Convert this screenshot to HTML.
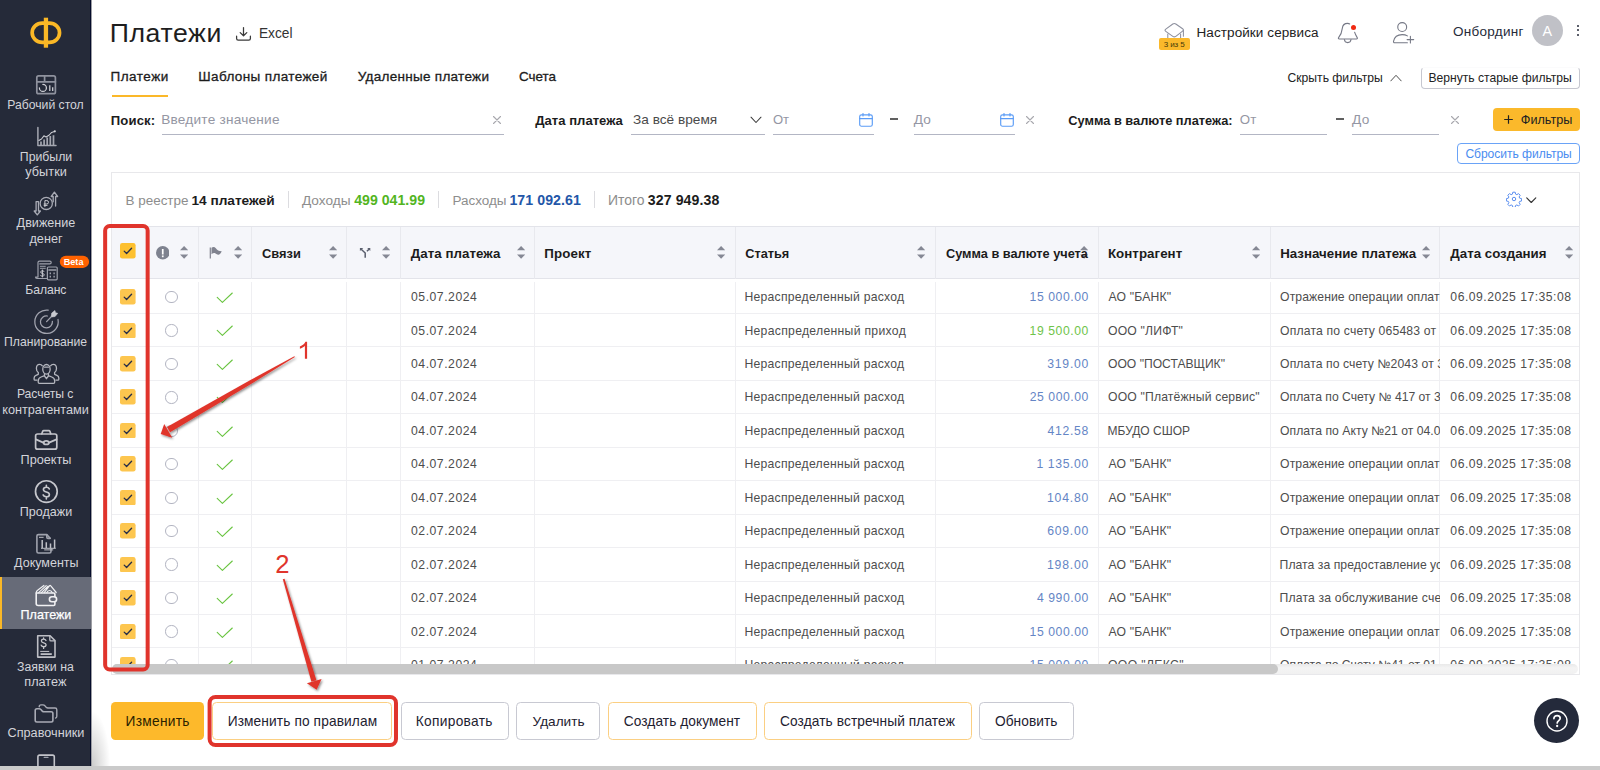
<!DOCTYPE html>
<html lang="ru"><head><meta charset="utf-8"><title>Платежи</title>
<style>
*{box-sizing:border-box;margin:0;padding:0}
html,body{width:1600px;height:770px;overflow:hidden;background:#fff}
body{font-family:"Liberation Sans",sans-serif;color:#1c1c1c;position:relative;font-size:13px}
.abs{position:absolute;white-space:nowrap;line-height:1}
/* sidebar */
#sb{position:absolute;left:0;top:0;width:91px;height:766px;background:#252a39;overflow:hidden}
#botbar{position:absolute;left:0;top:766.200px;width:1600px;height:3.800px;background:#cacaca}
#sbshadow{position:absolute;left:92px;top:712px;width:18px;height:54px;background:radial-gradient(ellipse at 0% 100%,rgba(0,0,0,.20),rgba(0,0,0,0) 72%)}
/* top */
/* table */
#tbl{position:absolute;left:111px;top:172px;width:1469px;height:503px;border:1px solid #e8e8eb;overflow:hidden}
#tin{position:absolute;left:-112px;top:-173px;width:1600px;height:770px}

</style></head>
<body>
<div id="sb"></div><div class="abs" style="left:90px;top:0;width:1px;height:766px;background:#050c2a"></div><div class="abs" style="left:91px;top:0;width:1px;height:766px;background:#9c9da3"></div>
<div class="abs" style="left:0;top:577.3px;width:91px;height:51.500px;background:#676b78;border-left:2.500px solid #fbb826"></div>
<svg class="abs" style="left:0;top:0;width:91px;height:770px" viewBox="0 0 91 770" fill="none" stroke="#b9bbc3" stroke-width="1.500" stroke-linecap="round" stroke-linejoin="round">
<rect x="32.150" y="23.150" width="27.400" height="19.200" rx="10.200" ry="9.600" stroke="#fbb826" stroke-width="3.700"/><path d="M45.950 17.700V47.700" stroke="#fbb826" stroke-width="4.300" stroke-linecap="butt"/>
<g stroke="#8f929e" stroke-width="1.700"><rect x="36.800" y="75.900" width="18.600" height="17.800" rx="1.800"/><path d="M36.800 81.800h18.600M44.600 76v5.800"/></g><path d="M42.900 84.400A3.500 3.500 0 1 1 39.400 87.900" stroke="#cfd0d6" stroke-width="1.250"/><path d="M49.800 85.200v5.800M52.700 87.300v3.700" stroke="#cfd0d6" stroke-width="1.250" stroke-linecap="butt"/>
<g stroke="#a4a6b0"><path d="M37.900 127.600V145.400H56" stroke-width="1.500"/><path d="M41 145v-3.600M44.100 145v-5.500M47.200 145v-7.400M50.300 145v-9M53.500 145v-9.800" stroke-width="1.700" stroke-linecap="butt"/></g><path d="M38.900 140.400l2.600-1.400 2.400-3.200 2.200 1.200 3.200-2 2.300-2.600 2.800-1" stroke="#c9cad0" stroke-width="1.100"/><circle cx="54.800" cy="131.300" r="1.100" fill="#d6d7dc" stroke="none"/>
<g stroke="#a9abb5" stroke-width="1.300"><circle cx="46.250" cy="203.400" r="6.100"/><path d="M36.100 201.600h2.400v9.400h1.900l-3.100 3.900-3.100-3.900h1.900z"/><path d="M55.600 206v-9.500h2l-3.200-4.400-3.200 4.400h2v5.300"/></g><path d="M44.900 206.700v-6.100h1.900a1.700 1.700 0 0 1 0 3.400h-2.700M44.100 205.400h3" stroke="#c9cad0" stroke-width="1"/>
<g stroke="#9da0ab" stroke-width="1.200"><path d="M38 262.600c0-.9.600-1.500 1.500-1.500h10.300c.8 0 1.400.6 1.400 1.400 0 .8-.6 1.400-1.400 1.400h-10M38 262.600v14.500M46.800 278.500h-9.800c-.9 0-1.500-.600-1.500-1.400h2.500"/><rect x="47.400" y="267" width="9.800" height="12.800" rx="1"/><path d="M48.900 270h6.800" stroke-width="1.600"/><path d="M49.600 273.400h1.400M53.400 273.400h1.400M49.600 276.600h1.400M53.400 276.600h1.400" stroke-width="1.800" stroke-linecap="butt"/><path d="M40.300 266.300h5M40.300 268.300h5" stroke-width="1"/></g><path d="M44.100 271.600c-.4-.6-1-.8-1.700-.8-1 0-1.700.5-1.700 1.300 0 1.900 3.500.8 3.500 2.700 0 .8-.7 1.400-1.800 1.400-.8 0-1.500-.3-1.900-.9M42.400 270v7" stroke="#c9cad0" stroke-width="1"/>
<rect x="59.800" y="255.700" width="29.300" height="12.200" rx="6.100" fill="#ff6200" stroke="none"/>
<g stroke="#a2a4af" stroke-width="1.250"><path d="M48.200 310.200a11.700 11.700 0 1 0 9.800 9.300"/><path d="M47.400 316a6 6 0 1 0 5 5.300"/><path d="M46.600 321.600l6.300-6.600"/></g><path d="M51.300 316.100l.4-3 3.200-2.600.6 2.200 2.200.6-2.600 3.200-3 .4z" fill="#c9cad0" stroke="#c9cad0" stroke-width=".6"/>
<g stroke="#b4b6be" stroke-width="1.300"><ellipse cx="46.450" cy="369.300" rx="3.700" ry="4.800"/><path d="M44.600 367.200h3.800"/><path d="M44.500 373.600v2.100l-3.400 1.300c-1.800.7-2.900 2-2.900 3.900v1.200c0 .7.500 1.200 1.200 1.200h14.100c.7 0 1.200-.5 1.200-1.200v-1.200c0-1.900-1.100-3.200-2.900-3.900l-3.400-1.300v-2.100M44.500 376l1.950 2.700 1.950-2.700"/><path d="M42.300 365.800c-.6-1-1.500-1.500-2.600-1.500-2 0-3.300 1.700-3.300 4.100 0 1.800.8 3.300 1.900 4.200v1.700l-2.300 1c-1.200.5-1.900 1.500-1.900 2.800v1.100c0 .6.400.9.900.9h2"/><path d="M50.600 365.800c.6-1 1.500-1.500 2.600-1.500 2 0 3.300 1.700 3.300 4.100 0 1.800-.8 3.300-1.900 4.200v1.700l2.300 1c1.200.5 1.900 1.500 1.900 2.800v1.100c0 .6-.4.900-.9.900h-2"/></g>
<g stroke="#c3c4ca" stroke-width="1.700"><rect x="35.600" y="434" width="21.200" height="15.200" rx="2"/><path d="M41.800 433.800l.9-2.400c.2-.5.600-.8 1.100-.8h5c.5 0 .9.300 1.100.8l.9 2.400"/><path d="M35.900 439.400l8 3.500M56.500 439.400l-8 3.500"/><ellipse cx="46.250" cy="442.700" rx="2.700" ry="1.750"/></g>
<g stroke="#c6c7cd" stroke-width="1.700"><circle cx="46.350" cy="491.600" r="10.850"/></g><path d="M49.300 488.900c-.5-1.100-1.600-1.700-2.900-1.700-1.800 0-3 .9-3 2.300 0 3.300 6 1.500 6 4.900 0 1.400-1.300 2.400-3.100 2.400-1.500 0-2.700-.7-3.200-1.900M46.350 485.300v1.900M46.350 496.800v2.200" stroke="#c6c7cd" stroke-width="1.600"/>
<g stroke="#9fa2ad" stroke-width="1.600"><path d="M51 548.800v2.700c0 .9-.6 1.500-1.500 1.500h-11.100c-.9 0-1.500-.600-1.500-1.500v-15.400c0-.9.600-1.500 1.500-1.500h8.400l3.400 3.600"/><path d="M46.800 534.800v2.400c0 .7.500 1.200 1.200 1.200h2"/></g><g stroke="#bfc0c7" stroke-width="1.500" stroke-linecap="butt"><path d="M42.200 540v8M46.300 542.200v5.800M50.500 543.400v4.600M54.600 539.400v8.600"/><path d="M41 548.300h14.800" stroke-width="1"/><path d="M44.200 549.900h9" stroke-width="1"/><path d="M39 537.300h4.600" stroke-width="1"/></g>
<g stroke="#f1f1f3" stroke-width="1.600"><path d="M54.900 596.500v-2.300c0-.7-.5-1.200-1.200-1.200H36.200v10.500c0 1.200.8 2 2 2h15.500c.7 0 1.200-.5 1.200-1.200v-2.300"/><rect x="49.400" y="596.700" width="7.200" height="5" rx="2.500"/><path d="M36.200 593c0-1.400.4-2.200 1.400-2.800l6.300-4.800M38.600 592.600l7.600-7M41.400 592.600l6.600-6.400M44.200 592.600l5.400-6.900c.3-.4.700-.4 1 0l5.600 6.800" stroke-width="1.200"/><path d="M46.800 592.600c.4-1.400 1.400-2.100 2.700-2.100 1.300 0 2.300.7 2.700 2.100" stroke-width="1.200"/></g>
<g stroke="#bdbec5" stroke-width="1.600"><path d="M37.700 635.700h12.400l4.900 4.900v16.500H37.700z"/><path d="M49.800 636v3.700c0 .7.500 1.200 1.200 1.200h3.700" stroke-width="1.300"/></g><path d="M46 640.500c-.4-.9-1.200-1.300-2.300-1.300-1.400 0-2.300.7-2.300 1.800 0 2.500 4.700 1.100 4.700 3.800 0 1.100-1 1.900-2.400 1.900-1.200 0-2.100-.500-2.500-1.500M43.600 637.800v1.400M43.600 646.700v1.700" stroke="#c6c7cd" stroke-width="1.300"/><path d="M40.600 651.400h8.200" stroke="#c6c7cd" stroke-width="1"/><path d="M40.600 654.100h11.200" stroke="#bdbec5" stroke-width="1.800" stroke-linecap="butt"/>
<g stroke="#a9abb5" stroke-width="1.600"><path d="M35.200 710.500c0-1 .7-1.700 1.700-1.700h2.300c.7 0 1.200.2 1.700.7l1.400 1.600c.5.500 1 .7 1.700.7h7.200c1 0 1.700.7 1.700 1.700v6.800c0 1-.7 1.700-1.700 1.700H36.900c-1 0-1.700-.7-1.700-1.700z"/><path d="M39.200 706.800c0-1.200.7-1.900 1.800-1.900h2c.7 0 1.200.2 1.700.7l1.500 1.700c.5.500 1 .7 1.700.7h7.200c1 0 1.700.7 1.700 1.700v6.600c0 .9-.4 1.500-1.200 1.800" stroke-width="1.400"/></g>
<path d="M37.900 766v-9.200c0-1 .7-1.700 1.700-1.700h13c1 0 1.700.7 1.700 1.700v9.200" stroke="#c3c4ca" stroke-width="1.600"/><path d="M44.300 757.400h3.600" stroke="#9da0ab" stroke-width="1.400"/>
</svg>
<span class="abs" style="left:7.32px;top:97.00px;font-size:12.20px;line-height:16px;letter-spacing:-0.008px;color:#d3d4d9;">Рабочий стол</span>
<span class="abs" style="left:19.82px;top:149.00px;font-size:12.28px;line-height:16px;letter-spacing:0.000px;color:#d3d4d9;">Прибыли</span>
<span class="abs" style="left:25.20px;top:164.00px;font-size:12.70px;line-height:16px;letter-spacing:0.078px;color:#d3d4d9;">убытки</span>
<span class="abs" style="left:16.60px;top:215.00px;font-size:12.61px;line-height:16px;letter-spacing:0.000px;color:#d3d4d9;">Движение</span>
<span class="abs" style="left:29.47px;top:231.00px;font-size:12.67px;line-height:16px;letter-spacing:0.000px;color:#d3d4d9;">денег</span>
<span class="abs" style="left:25.22px;top:282.00px;font-size:12.20px;line-height:16px;letter-spacing:-0.048px;color:#d3d4d9;">Баланс</span>
<span class="abs" style="left:4.02px;top:334.00px;font-size:12.20px;line-height:16px;letter-spacing:-0.004px;color:#d3d4d9;">Планирование</span>
<span class="abs" style="left:16.92px;top:386.00px;font-size:12.20px;line-height:16px;letter-spacing:-0.070px;color:#d3d4d9;">Расчеты с</span>
<span class="abs" style="left:2.24px;top:402.00px;font-size:12.69px;line-height:16px;letter-spacing:0.000px;color:#d3d4d9;">контрагентами</span>
<span class="abs" style="left:20.58px;top:452.00px;font-size:12.69px;line-height:16px;letter-spacing:0.000px;color:#d3d4d9;">Проекты</span>
<span class="abs" style="left:19.80px;top:504.00px;font-size:12.56px;line-height:16px;letter-spacing:0.000px;color:#d3d4d9;">Продажи</span>
<span class="abs" style="left:14.10px;top:555.00px;font-size:12.50px;line-height:16px;letter-spacing:0.000px;color:#d3d4d9;">Документы</span>
<span class="abs" style="left:17.03px;top:659.00px;font-size:12.31px;line-height:16px;letter-spacing:0.000px;color:#d3d4d9;">Заявки на</span>
<span class="abs" style="left:24.31px;top:674.00px;font-size:12.68px;line-height:16px;letter-spacing:0.000px;color:#d3d4d9;">платеж</span>
<span class="abs" style="left:7.57px;top:725.00px;font-size:12.68px;line-height:16px;letter-spacing:0.000px;color:#d3d4d9;">Справочники</span>
<span class="abs" style="left:20.60px;top:607.00px;font-size:12.53px;line-height:16px;letter-spacing:0.000px;color:#fff;-webkit-text-stroke:0.25px #fff;">Платежи</span>
<span class="abs" style="left:63.75px;top:256.00px;font-size:9.10px;line-height:12px;letter-spacing:0.000px;color:#fff;font-weight:bold;">Beta</span><div id="sbshadow"></div><div id="botbar"></div>
<span class="abs" id="title" style="left:109.67px;top:16.00px;font-size:26.65px;line-height:34px;letter-spacing:0.600px;color:#1e1e1e;">Платежи</span>
<svg class="abs" style="left:235px;top:25.5px;width:17px;height:16px;fill:none;stroke:#3a3a3a;stroke-width:1.25;stroke-linecap:round;stroke-linejoin:round" viewBox="0 0 17 16"><path d="M8.5 1.5v8.2M5.2 6.6l3.3 3.2 3.3-3.2M1.6 10.2v2.2a1.6 1.6 0 0 0 1.6 1.6h10.6a1.6 1.6 0 0 0 1.6-1.6v-2.2"/></svg>
<span class="abs" style="left:258.90px;top:24.50px;font-size:13.74px;line-height:18px;letter-spacing:0.000px;color:#333;">Excel</span>
<span class="abs" style="left:110.52px;top:68.00px;font-size:13.53px;line-height:17px;letter-spacing:0.500px;color:#1c1c1c;-webkit-text-stroke:0.3px #1c1c1c;">Платежи</span>
<span class="abs" style="left:198.32px;top:68.00px;font-size:13.53px;line-height:17px;letter-spacing:0.364px;color:#1c1c1c;-webkit-text-stroke:0.3px #1c1c1c;">Шаблоны платежей</span>
<span class="abs" style="left:357.79px;top:68.00px;font-size:13.53px;line-height:17px;letter-spacing:0.280px;color:#1c1c1c;-webkit-text-stroke:0.3px #1c1c1c;">Удаленные платежи</span>
<span class="abs" style="left:518.93px;top:68.00px;font-size:13.43px;line-height:17px;letter-spacing:0.000px;color:#1c1c1c;-webkit-text-stroke:0.3px #1c1c1c;">Счета</span>
<div class="abs" style="left:111.5px;top:94.6px;width:56.5px;height:2px;background:#fbb829"></div>
<span class="abs" style="left:110.81px;top:112.00px;font-size:13.12px;line-height:17px;letter-spacing:0.136px;color:#1c1c1c;font-weight:bold;">Поиск:</span>
<span class="abs" style="left:161.21px;top:111.00px;font-size:13.63px;line-height:17px;letter-spacing:0.228px;color:#9496a3;">Введите значение</span>
<div class="abs" style="left:162.3px;top:134px;width:342.1px;height:1px;background:#b3b6c4"></div>
<svg class="abs" style="left:492.8px;top:115.7px;width:8px;height:8px;stroke:#a8a8ae;stroke-width:1.1;fill:none;stroke-linecap:round" viewBox="0 0 8 8"><path d="M0.500 0.500l7 7M7.500 0.500l-7 7"/></svg>
<span class="abs" style="left:535.27px;top:112.00px;font-size:13.09px;line-height:17px;letter-spacing:0.000px;color:#1c1c1c;font-weight:bold;">Дата платежа</span>
<span class="abs" style="left:633.09px;top:111.00px;font-size:13.63px;line-height:17px;letter-spacing:0.008px;color:#4a4a4a;">За всё время</span>
<svg class="abs" style="left:750px;top:116px;width:12px;height:8px;fill:none;stroke:#3c3c3c;stroke-width:1.050;stroke-linecap:round;stroke-linejoin:round" viewBox="0 0 12 8"><path d="M1 1.2l5 5.3 5-5.3"/></svg>
<div class="abs" style="left:630.9px;top:134px;width:133.9px;height:1px;background:#b3b6c4"></div>
<span class="abs" style="left:772.88px;top:111.00px;font-size:13.05px;line-height:17px;letter-spacing:0.000px;color:#9496a3;">От</span>
<svg class="abs" style="left:859px;top:113.2px;width:14px;height:14px;fill:none;stroke:#5b9cf6;stroke-width:1.150;stroke-linecap:round;stroke-linejoin:round" viewBox="0 0 14 14"><rect x="0.700" y="1.800" width="12.600" height="11.400" rx="1.800"/><path d="M0.700 5.600h12.600M4 0.500v2.400M10 0.500v2.400"/></svg>
<div class="abs" style="left:772.8px;top:134px;width:101.2px;height:1px;background:#b3b6c4"></div>
<div class="abs" style="left:889.6px;top:118px;width:8.4px;height:2px;background:#606060"></div>
<span class="abs" style="left:913.70px;top:111.00px;font-size:13.63px;line-height:17px;letter-spacing:0.205px;color:#9496a3;">До</span>
<svg class="abs" style="left:1000px;top:113.2px;width:14px;height:14px;fill:none;stroke:#5b9cf6;stroke-width:1.150;stroke-linecap:round;stroke-linejoin:round" viewBox="0 0 14 14"><rect x="0.700" y="1.800" width="12.600" height="11.400" rx="1.800"/><path d="M0.700 5.600h12.600M4 0.500v2.400M10 0.500v2.400"/></svg>
<div class="abs" style="left:913.8px;top:134px;width:101.0px;height:1px;background:#b3b6c4"></div>
<svg class="abs" style="left:1026.3px;top:115.7px;width:8px;height:8px;stroke:#a8a8ae;stroke-width:1.1;fill:none;stroke-linecap:round" viewBox="0 0 8 8"><path d="M0.500 0.500l7 7M7.500 0.500l-7 7"/></svg>
<span class="abs" style="left:1068.29px;top:112.00px;font-size:12.81px;line-height:17px;letter-spacing:0.000px;color:#1c1c1c;font-weight:bold;">Сумма в валюте платежа:</span>
<span class="abs" style="left:1239.87px;top:111.00px;font-size:13.22px;line-height:17px;letter-spacing:0.000px;color:#9496a3;">От</span>
<div class="abs" style="left:1240px;top:134px;width:87.2px;height:1px;background:#b3b6c4"></div>
<div class="abs" style="left:1336px;top:118px;width:8.2px;height:2px;background:#606060"></div>
<span class="abs" style="left:1352.10px;top:111.00px;font-size:13.63px;line-height:17px;letter-spacing:0.205px;color:#9496a3;">До</span>
<div class="abs" style="left:1352px;top:134px;width:87.3px;height:1px;background:#b3b6c4"></div>
<svg class="abs" style="left:1451px;top:115.7px;width:8px;height:8px;stroke:#a8a8ae;stroke-width:1.1;fill:none;stroke-linecap:round" viewBox="0 0 8 8"><path d="M0.500 0.500l7 7M7.500 0.500l-7 7"/></svg>
<div class="abs" style="left:1493px;top:108px;width:86.5px;height:22.5px;border-radius:4px;background:#fbb92b"></div>
<svg class="abs" style="left:1503.6px;top:114.6px;width:9px;height:9px;stroke:#222;stroke-width:1.2;fill:none" viewBox="0 0 9 9"><path d="M4.5 0.2v8.6M0.2 4.5h8.6"/></svg>
<span class="abs" style="left:1520.84px;top:112.00px;font-size:12.63px;line-height:16px;letter-spacing:0.000px;color:#222;">Фильтры</span>
<div class="abs" style="left:1457px;top:142.7px;width:122.8px;height:21.7px;border-radius:4px;border:1px solid #6aa3f7;background:#fff"></div>
<span class="abs" style="left:1465.40px;top:146.00px;font-size:12.09px;line-height:16px;letter-spacing:-0.044px;color:#4a8cf0;">Сбросить фильтры</span>
<span class="abs" style="left:1287.49px;top:70.00px;font-size:12.17px;line-height:16px;letter-spacing:0.000px;color:#222;">Скрыть фильтры</span>
<svg class="abs" style="left:1390px;top:74.3px;width:12px;height:8px;fill:none;stroke:#444;stroke-width:0.95;stroke-linecap:round;stroke-linejoin:round" viewBox="0 0 12 8"><path d="M0.8 6.9l5.2-5.6 5.2 5.6"/></svg>
<div class="abs" style="left:1421px;top:66.8px;width:158.8px;height:22px;border-radius:4px;border:1px solid #c6c7d0;border-top-color:#fbfbfc;background:#fff"></div>
<span class="abs" style="left:1428.43px;top:70.00px;font-size:12.11px;line-height:16px;letter-spacing:0.000px;color:#222;">Вернуть старые фильтры</span>
<svg class="abs" style="left:1163px;top:21.5px;width:23px;height:19px;fill:none;stroke:#8d909e;stroke-width:1.050;stroke-linecap:round;stroke-linejoin:round" viewBox="0 0 23 19"><path d="M9.800 2.000Q11.300 1.000 12.800 2.000L19.600 6.800Q21.200 7.900 19.600 9.100L12.800 14.300Q11.300 15.400 9.800 14.300L2.800 9.400Q1.200 8.300 2.800 7.100Z"/><path d="M4.800 12.000V17M17.600 12.000V17M20.400 8.200V14.200"/></svg>
<div class="abs" style="left:1159.3px;top:38.4px;width:30.4px;height:11.6px;border-radius:2px;background:#fbb92b"></div>
<span class="abs" style="left:1163.68px;top:39.00px;font-size:8.09px;line-height:11px;letter-spacing:-0.104px;color:#4a3a0a;">3 из 5</span>
<span class="abs" style="left:1196.52px;top:24.00px;font-size:13.53px;line-height:17px;letter-spacing:0.077px;color:#222;">Настройки сервиса</span>
<svg class="abs" style="left:1336px;top:21px;width:24px;height:24px;fill:none;stroke:#767986;stroke-width:1.100;stroke-linecap:round;stroke-linejoin:round" viewBox="1336 21 24 24"><path d="M1349.700 24.000C1349.100 23.600 1348.400 23.400 1347.600 23.400C1344.500 23.400 1342.600 25.600 1342.300 28.400C1342.000 31.500 1341.000 34.600 1338.600 37.600C1338.100 38.300 1338.400 39.000 1339.300 39.000L1356.500 39.000C1357.400 39.000 1357.600 38.300 1357.200 37.600C1356.200 36.000 1355.200 34.200 1354.600 32.200"/><path d="M1344.400 39.500C1344.600 41.400 1346.000 42.600 1347.700 42.600C1349.400 42.600 1350.800 41.400 1351.000 39.500"/></svg>
<div class="abs" style="left:1350.95px;top:24.700px;width:5px;height:5px;border-radius:50%;background:#f02a12"></div>
<svg class="abs" style="left:1390px;top:20px;width:26px;height:26px;fill:none;stroke:#767986;stroke-width:1.100;stroke-linecap:round;stroke-linejoin:round" viewBox="1390 20 26 26"><circle cx="1402.200" cy="27.050" r="4.450"/><path d="M1407.400 35.900C1405.900 35.000 1404.200 34.600 1402.200 34.600C1397.600 34.600 1394.300 37.300 1393.500 41.400C1393.400 42.200 1393.800 42.700 1394.600 42.700L1407.400 42.700M1410.400 36.300V42.900M1407.100 39.600H1413.700"/></svg>
<span class="abs" style="left:1452.96px;top:23.00px;font-size:13.53px;line-height:17px;letter-spacing:0.286px;color:#262b3a;">Онбординг</span>
<div class="abs" style="left:1532px;top:15.1px;width:30.8px;height:30.8px;border-radius:50%;background:#c0c1c7"></div>
<span class="abs" style="left:1542.60px;top:22.00px;font-size:14.33px;line-height:18px;letter-spacing:0.000px;color:#fff;">A</span>
<div class="abs" style="left:1577px;top:24.5px;width:2.2px;height:2.2px;border-radius:50%;background:#262b3a"></div>
<div class="abs" style="left:1577px;top:29.2px;width:2.2px;height:2.2px;border-radius:50%;background:#262b3a"></div>
<div class="abs" style="left:1577px;top:34.0px;width:2.2px;height:2.2px;border-radius:50%;background:#262b3a"></div>
<div id="tbl"><div id="tin">
<span class="abs" style="left:125.52px;top:191.50px;font-size:13.46px;line-height:18px;letter-spacing:-0.007px;color:#8d8d8d;">В реестре</span>
<span class="abs" style="left:191.38px;top:191.50px;font-size:13.68px;line-height:18px;letter-spacing:0.000px;color:#1c1c1c;font-weight:bold;">14 платежей</span>
<span class="abs" style="left:301.90px;top:191.50px;font-size:13.67px;line-height:18px;letter-spacing:0.000px;color:#8d8d8d;">Доходы</span>
<span class="abs" style="left:354.26px;top:191.00px;font-size:14.14px;line-height:18px;letter-spacing:0.005px;color:#52b51f;font-weight:bold;">499 041.99</span>
<span class="abs" style="left:452.42px;top:191.50px;font-size:13.46px;line-height:18px;letter-spacing:0.000px;color:#8d8d8d;">Расходы</span>
<span class="abs" style="left:509.45px;top:191.00px;font-size:14.14px;line-height:18px;letter-spacing:0.079px;color:#2356a8;font-weight:bold;">171 092.61</span>
<span class="abs" style="left:607.98px;top:191.00px;font-size:13.96px;line-height:18px;letter-spacing:0.000px;color:#8d8d8d;">Итого</span>
<span class="abs" style="left:647.82px;top:191.00px;font-size:14.14px;line-height:18px;letter-spacing:0.082px;color:#1c1c1c;font-weight:bold;">327 949.38</span>
<div class="abs" style="left:287.9px;top:191px;width:1px;height:17px;background:#dcdce0"></div>
<div class="abs" style="left:438.0px;top:191px;width:1px;height:17px;background:#dcdce0"></div>
<div class="abs" style="left:594.2px;top:191px;width:1px;height:17px;background:#dcdce0"></div>
<svg class="abs" style="left:1505.5px;top:191px;width:16px;height:16px;fill:none;stroke:#5b8ff0;stroke-width:1.500;stroke-linejoin:round" viewBox="0 0 24 24"><circle cx="12" cy="12" r="2.600"/><path d="M10.200 1.800h3.600l.6 2.900 1.900.8 2.500-1.600 2.500 2.500-1.600 2.500.8 1.900 2.900.6v3.600l-2.900.6-.8 1.900 1.600 2.500-2.500 2.500-2.500-1.600-1.900.8-.6 2.900h-3.600l-.6-2.900-1.900-.8-2.500 1.600-2.500-2.500 1.600-2.500-.8-1.900-2.900-.6v-3.600l2.900-.6.8-1.900-1.600-2.500 2.500-2.500 2.500 1.600 1.900-.8z"/></svg>
<svg class="abs" style="left:1526px;top:196.500px;width:10.500px;height:6.500px;fill:none;stroke:#333;stroke-width:1.1;stroke-linecap:round;stroke-linejoin:round" viewBox="0 0 10.500 6.500"><path d="M0.700 0.800l4.550 4.700 4.550-4.700"/></svg>
<div class="abs" style="left:112px;top:226.3px;width:1468px;height:53px;background:#f5f6fa;border-top:1px solid #e3e4ea;border-bottom:1px solid #e3e4ea"></div>
<div class="abs" style="left:197.9px;top:227px;width:1px;height:52px;background:#e8e9ee"></div>
<div class="abs" style="left:197.9px;top:281.500px;width:1px;height:394px;background:#efeff2"></div>
<div class="abs" style="left:250.9px;top:227px;width:1px;height:52px;background:#e8e9ee"></div>
<div class="abs" style="left:250.9px;top:281.500px;width:1px;height:394px;background:#efeff2"></div>
<div class="abs" style="left:346.4px;top:227px;width:1px;height:52px;background:#e8e9ee"></div>
<div class="abs" style="left:346.4px;top:281.500px;width:1px;height:394px;background:#efeff2"></div>
<div class="abs" style="left:400.2px;top:227px;width:1px;height:52px;background:#e8e9ee"></div>
<div class="abs" style="left:400.2px;top:281.500px;width:1px;height:394px;background:#efeff2"></div>
<div class="abs" style="left:533.9px;top:227px;width:1px;height:52px;background:#e8e9ee"></div>
<div class="abs" style="left:533.9px;top:281.500px;width:1px;height:394px;background:#efeff2"></div>
<div class="abs" style="left:734.6px;top:227px;width:1px;height:52px;background:#e8e9ee"></div>
<div class="abs" style="left:734.6px;top:281.500px;width:1px;height:394px;background:#efeff2"></div>
<div class="abs" style="left:934.8px;top:227px;width:1px;height:52px;background:#e8e9ee"></div>
<div class="abs" style="left:934.8px;top:281.500px;width:1px;height:394px;background:#efeff2"></div>
<div class="abs" style="left:1098.0px;top:227px;width:1px;height:52px;background:#e8e9ee"></div>
<div class="abs" style="left:1098.0px;top:281.500px;width:1px;height:394px;background:#efeff2"></div>
<div class="abs" style="left:1269.8px;top:227px;width:1px;height:52px;background:#e8e9ee"></div>
<div class="abs" style="left:1269.8px;top:281.500px;width:1px;height:394px;background:#efeff2"></div>
<div class="abs" style="left:1439.2px;top:227px;width:1px;height:52px;background:#e8e9ee"></div>
<div class="abs" style="left:1439.2px;top:281.500px;width:1px;height:394px;background:#efeff2"></div>
<svg class="abs" style="left:120px;top:243.1px;width:15.6px;height:15.6px" viewBox="0 0 15.600 15.600"><rect width="15.600" height="15.600" rx="2.300" fill="#fdc02f"/><path d="M4.200 8.100L6.600 10.500L11.600 5.200" fill="none" stroke="#262d48" stroke-width="1.300" stroke-linecap="round" stroke-linejoin="round"/></svg>
<svg class="abs" style="left:155.900px;top:246.300px;width:13.500px;height:13.500px" viewBox="0 0 13.500 13.500"><circle cx="6.750" cy="6.750" r="6.700" fill="#7e828f"/><path d="M6.750 2.900v6.700" stroke="#fff" stroke-width="1.700" stroke-linecap="butt" stroke-dasharray="5.600 0.500 0.600"/><rect x="5.900" y="9.900" width="1.700" height="1.300" fill="#fff"/></svg>
<svg class="abs" style="left:180.10px;top:245.75px;width:8.2px;height:12.8px" viewBox="0 0 8.200 12.800"><path d="M4.100 0L8.200 4.300H0z" fill="#858894"/><path d="M4.100 12.800L8.200 8.500H0z" fill="#858894"/></svg>
<svg class="abs" style="left:209px;top:246px;width:14px;height:14px" viewBox="209 246 14 14"><path d="M210.300 247.400V258.600" stroke="#80838f" stroke-width="1.200" fill="none"/><path d="M211.500 247.700C213.000 246.700 214.700 246.800 215.800 248.200C217.200 250.000 218.800 251.300 221.700 251.300C221.000 253.000 220.000 254.200 218.700 254.700C216.800 254.800 216.000 253.400 214.700 253.000C213.600 252.800 212.500 253.300 211.500 254.300Z" fill="#80838f"/></svg>
<svg class="abs" style="left:233.60px;top:245.75px;width:8.2px;height:12.8px" viewBox="0 0 8.200 12.800"><path d="M4.100 0L8.200 4.300H0z" fill="#858894"/><path d="M4.100 12.800L8.200 8.500H0z" fill="#858894"/></svg>
<span class="abs" style="left:261.98px;top:245.00px;font-size:12.89px;line-height:17px;letter-spacing:0.000px;color:#1c1c1c;font-weight:bold;">Связи</span>
<svg class="abs" style="left:328.80px;top:245.75px;width:8.2px;height:12.8px" viewBox="0 0 8.200 12.800"><path d="M4.100 0L8.200 4.300H0z" fill="#858894"/><path d="M4.100 12.800L8.200 8.500H0z" fill="#858894"/></svg>
<svg class="abs" style="left:358px;top:246px;width:14px;height:14px" viewBox="358 246 14 14"><path d="M365.200 257.800V253.000L361.200 249.200M366.900 251.300L369.000 249.200" stroke="#5a5f6e" stroke-width="1.500" fill="none"/><path d="M359.900 248.000h3.400l-3.400 3.100zM370.300 248.000h-3.100l3.100 2.900z" fill="#5a5f6e"/></svg>
<svg class="abs" style="left:382.30px;top:245.75px;width:8.2px;height:12.8px" viewBox="0 0 8.200 12.800"><path d="M4.100 0L8.200 4.300H0z" fill="#858894"/><path d="M4.100 12.800L8.200 8.500H0z" fill="#858894"/></svg>
<span class="abs" style="left:410.77px;top:245.00px;font-size:13.32px;line-height:17px;letter-spacing:0.038px;color:#1c1c1c;font-weight:bold;">Дата платежа</span>
<svg class="abs" style="left:516.50px;top:245.75px;width:8.2px;height:12.8px" viewBox="0 0 8.200 12.800"><path d="M4.100 0L8.200 4.300H0z" fill="#858894"/><path d="M4.100 12.800L8.200 8.500H0z" fill="#858894"/></svg>
<span class="abs" style="left:544.20px;top:245.00px;font-size:13.32px;line-height:17px;letter-spacing:0.139px;color:#1c1c1c;font-weight:bold;">Проект</span>
<svg class="abs" style="left:716.80px;top:245.75px;width:8.2px;height:12.8px" viewBox="0 0 8.200 12.800"><path d="M4.100 0L8.200 4.300H0z" fill="#858894"/><path d="M4.100 12.800L8.200 8.500H0z" fill="#858894"/></svg>
<span class="abs" style="left:745.19px;top:245.00px;font-size:12.75px;line-height:17px;letter-spacing:0.000px;color:#1c1c1c;font-weight:bold;">Статья</span>
<svg class="abs" style="left:917.30px;top:245.75px;width:8.2px;height:12.8px" viewBox="0 0 8.200 12.800"><path d="M4.100 0L8.200 4.300H0z" fill="#858894"/><path d="M4.100 12.800L8.200 8.500H0z" fill="#858894"/></svg>
<svg class="abs" style="left:1079.60px;top:245.75px;width:8.2px;height:12.8px" viewBox="0 0 8.200 12.800"><path d="M4.100 0L8.200 4.300H0z" fill="#858894"/><path d="M4.100 12.800L8.200 8.500H0z" fill="#858894"/></svg>
<span class="abs" style="left:945.99px;top:245.00px;font-size:12.76px;line-height:17px;letter-spacing:0.000px;color:#1c1c1c;font-weight:bold;">Сумма в валюте учета</span>
<span class="abs" style="left:1107.95px;top:245.00px;font-size:13.32px;line-height:17px;letter-spacing:0.044px;color:#1c1c1c;font-weight:bold;">Контрагент</span>
<svg class="abs" style="left:1251.70px;top:245.75px;width:8.2px;height:12.8px" viewBox="0 0 8.200 12.800"><path d="M4.100 0L8.200 4.300H0z" fill="#858894"/><path d="M4.100 12.800L8.200 8.500H0z" fill="#858894"/></svg>
<span class="abs" style="left:1280.20px;top:245.00px;font-size:13.31px;line-height:17px;letter-spacing:0.000px;color:#1c1c1c;font-weight:bold;">Назначение платежа</span>
<svg class="abs" style="left:1421.90px;top:245.75px;width:8.2px;height:12.8px" viewBox="0 0 8.200 12.800"><path d="M4.100 0L8.200 4.300H0z" fill="#858894"/><path d="M4.100 12.800L8.200 8.500H0z" fill="#858894"/></svg>
<span class="abs" style="left:1450.27px;top:245.00px;font-size:13.30px;line-height:17px;letter-spacing:0.000px;color:#1c1c1c;font-weight:bold;">Дата создания</span>
<svg class="abs" style="left:1565.20px;top:245.75px;width:8.2px;height:12.8px" viewBox="0 0 8.200 12.800"><path d="M4.100 0L8.200 4.300H0z" fill="#858894"/><path d="M4.100 12.800L8.200 8.500H0z" fill="#858894"/></svg>
<div class="abs" style="left:112px;top:312.95px;width:1468px;height:1px;background:#efeff2"></div>
<svg class="abs" style="left:120px;top:289.1px;width:15.6px;height:15.6px" viewBox="0 0 15.600 15.600"><rect width="15.600" height="15.600" rx="2.300" fill="#fdc64f"/><path d="M4.200 8.100L6.600 10.500L11.600 5.200" fill="none" stroke="#262d48" stroke-width="1.300" stroke-linecap="round" stroke-linejoin="round"/></svg>
<div class="abs" style="left:165.3px;top:290.80px;width:12.4px;height:12.4px;border-radius:50%;border:1px solid #b3b5c2;background:#fff"></div>
<svg class="abs" style="left:216.3px;top:292.00px;width:17.5px;height:11.5px;fill:none;stroke:#69c440;stroke-width:1.080;stroke-linecap:round;stroke-linejoin:round" viewBox="0 0 17.500 11.500"><path d="M1.200 5.300l5.200 5.100L16.300 1.000"/></svg>
<span class="abs" style="left:411.01px;top:289.50px;font-size:12.20px;line-height:15px;letter-spacing:0.538px;color:#4d4d4d;">05.07.2024</span>
<span class="abs" style="left:744.42px;top:289.50px;font-size:12.20px;line-height:15px;letter-spacing:0.256px;color:#4d4d4d;">Нераспределенный расход</span>
<span class="abs" style="left:1029.55px;top:289.50px;font-size:12.20px;line-height:15px;letter-spacing:0.570px;color:#6485c5;">15 000.00</span>
<span class="abs" style="left:1108.50px;top:289.50px;font-size:12.20px;line-height:15px;letter-spacing:0.191px;color:#4d4d4d;">АО "БАНК"</span>
<div class="abs" style="left:1271px;top:280.00px;width:168.7px;height:33px;overflow:hidden"><div style="position:absolute;left:-1271px;top:-280.00px">
<span class="abs" style="left:1280.11px;top:289.50px;font-size:12.20px;line-height:15px;letter-spacing:0.083px;color:#4d4d4d;">Отражение операции оплаты</span>
</div></div>
<span class="abs" style="left:1450.36px;top:289.50px;font-size:12.20px;line-height:15px;letter-spacing:0.492px;color:#4d4d4d;">06.09.2025 17:35:08</span>
<div class="abs" style="left:112px;top:346.40px;width:1468px;height:1px;background:#efeff2"></div>
<svg class="abs" style="left:120px;top:322.55px;width:15.6px;height:15.6px" viewBox="0 0 15.600 15.600"><rect width="15.600" height="15.600" rx="2.300" fill="#fdc64f"/><path d="M4.200 8.100L6.600 10.500L11.600 5.200" fill="none" stroke="#262d48" stroke-width="1.300" stroke-linecap="round" stroke-linejoin="round"/></svg>
<div class="abs" style="left:165.3px;top:324.25px;width:12.4px;height:12.4px;border-radius:50%;border:1px solid #b3b5c2;background:#fff"></div>
<svg class="abs" style="left:216.3px;top:325.45px;width:17.5px;height:11.5px;fill:none;stroke:#69c440;stroke-width:1.080;stroke-linecap:round;stroke-linejoin:round" viewBox="0 0 17.500 11.500"><path d="M1.200 5.300l5.200 5.100L16.300 1.000"/></svg>
<span class="abs" style="left:411.01px;top:323.50px;font-size:12.20px;line-height:15px;letter-spacing:0.538px;color:#4d4d4d;">05.07.2024</span>
<span class="abs" style="left:744.42px;top:323.50px;font-size:12.20px;line-height:15px;letter-spacing:0.303px;color:#4d4d4d;">Нераспределенный приход</span>
<span class="abs" style="left:1029.55px;top:323.50px;font-size:12.20px;line-height:15px;letter-spacing:0.570px;color:#6fc44a;">19 500.00</span>
<span class="abs" style="left:1108.01px;top:323.50px;font-size:12.20px;line-height:15px;letter-spacing:0.174px;color:#4d4d4d;">ООО "ЛИФТ"</span>
<div class="abs" style="left:1271px;top:313.45px;width:168.7px;height:33px;overflow:hidden"><div style="position:absolute;left:-1271px;top:-313.45px">
<span class="abs" style="left:1280.11px;top:323.50px;font-size:12.20px;line-height:15px;letter-spacing:0.159px;color:#4d4d4d;">Оплата по счету 065483 от</span>
</div></div>
<span class="abs" style="left:1450.36px;top:323.50px;font-size:12.20px;line-height:15px;letter-spacing:0.492px;color:#4d4d4d;">06.09.2025 17:35:08</span>
<div class="abs" style="left:112px;top:379.85px;width:1468px;height:1px;background:#efeff2"></div>
<svg class="abs" style="left:120px;top:356.0px;width:15.6px;height:15.6px" viewBox="0 0 15.600 15.600"><rect width="15.600" height="15.600" rx="2.300" fill="#fdc64f"/><path d="M4.200 8.100L6.600 10.500L11.600 5.200" fill="none" stroke="#262d48" stroke-width="1.300" stroke-linecap="round" stroke-linejoin="round"/></svg>
<div class="abs" style="left:165.3px;top:357.70px;width:12.4px;height:12.4px;border-radius:50%;border:1px solid #b3b5c2;background:#fff"></div>
<svg class="abs" style="left:216.3px;top:358.90px;width:17.5px;height:11.5px;fill:none;stroke:#69c440;stroke-width:1.080;stroke-linecap:round;stroke-linejoin:round" viewBox="0 0 17.500 11.500"><path d="M1.200 5.300l5.200 5.100L16.300 1.000"/></svg>
<span class="abs" style="left:411.01px;top:356.50px;font-size:12.20px;line-height:15px;letter-spacing:0.538px;color:#4d4d4d;">04.07.2024</span>
<span class="abs" style="left:744.42px;top:356.50px;font-size:12.20px;line-height:15px;letter-spacing:0.256px;color:#4d4d4d;">Нераспределенный расход</span>
<span class="abs" style="left:1047.31px;top:356.50px;font-size:12.20px;line-height:15px;letter-spacing:0.750px;color:#6485c5;">319.00</span>
<span class="abs" style="left:1108.02px;top:356.50px;font-size:12.12px;line-height:15px;letter-spacing:0.000px;color:#4d4d4d;">ООО "ПОСТАВЩИК"</span>
<div class="abs" style="left:1271px;top:346.90px;width:168.7px;height:33px;overflow:hidden"><div style="position:absolute;left:-1271px;top:-346.90px">
<span class="abs" style="left:1280.11px;top:356.50px;font-size:12.20px;line-height:15px;letter-spacing:0.087px;color:#4d4d4d;">Оплата по счету №2043 от 3</span>
</div></div>
<span class="abs" style="left:1450.36px;top:356.50px;font-size:12.20px;line-height:15px;letter-spacing:0.492px;color:#4d4d4d;">06.09.2025 17:35:08</span>
<div class="abs" style="left:112px;top:413.30px;width:1468px;height:1px;background:#efeff2"></div>
<svg class="abs" style="left:120px;top:389.45px;width:15.6px;height:15.6px" viewBox="0 0 15.600 15.600"><rect width="15.600" height="15.600" rx="2.300" fill="#fdc64f"/><path d="M4.200 8.100L6.600 10.500L11.600 5.200" fill="none" stroke="#262d48" stroke-width="1.300" stroke-linecap="round" stroke-linejoin="round"/></svg>
<div class="abs" style="left:165.3px;top:391.15px;width:12.4px;height:12.4px;border-radius:50%;border:1px solid #b3b5c2;background:#fff"></div>
<svg class="abs" style="left:216.3px;top:392.35px;width:17.5px;height:11.5px;fill:none;stroke:#69c440;stroke-width:1.080;stroke-linecap:round;stroke-linejoin:round" viewBox="0 0 17.500 11.500"><path d="M1.200 5.300l5.200 5.100L16.300 1.000"/></svg>
<span class="abs" style="left:411.01px;top:389.50px;font-size:12.20px;line-height:15px;letter-spacing:0.538px;color:#4d4d4d;">04.07.2024</span>
<span class="abs" style="left:744.42px;top:389.50px;font-size:12.20px;line-height:15px;letter-spacing:0.256px;color:#4d4d4d;">Нераспределенный расход</span>
<span class="abs" style="left:1029.79px;top:389.50px;font-size:12.20px;line-height:15px;letter-spacing:0.540px;color:#6485c5;">25 000.00</span>
<span class="abs" style="left:1108.01px;top:389.50px;font-size:12.20px;line-height:15px;letter-spacing:0.162px;color:#4d4d4d;">ООО "Платёжный сервис"</span>
<div class="abs" style="left:1271px;top:380.35px;width:168.7px;height:33px;overflow:hidden"><div style="position:absolute;left:-1271px;top:-380.35px">
<span class="abs" style="left:1280.11px;top:389.50px;font-size:12.16px;line-height:15px;letter-spacing:0.000px;color:#4d4d4d;">Оплата по Счету № 417 от 3</span>
</div></div>
<span class="abs" style="left:1450.36px;top:389.50px;font-size:12.20px;line-height:15px;letter-spacing:0.492px;color:#4d4d4d;">06.09.2025 17:35:08</span>
<div class="abs" style="left:112px;top:446.75px;width:1468px;height:1px;background:#efeff2"></div>
<svg class="abs" style="left:120px;top:422.9px;width:15.6px;height:15.6px" viewBox="0 0 15.600 15.600"><rect width="15.600" height="15.600" rx="2.300" fill="#fdc64f"/><path d="M4.200 8.100L6.600 10.500L11.600 5.200" fill="none" stroke="#262d48" stroke-width="1.300" stroke-linecap="round" stroke-linejoin="round"/></svg>
<div class="abs" style="left:165.3px;top:424.60px;width:12.4px;height:12.4px;border-radius:50%;border:1px solid #b3b5c2;background:#fff"></div>
<svg class="abs" style="left:216.3px;top:425.80px;width:17.5px;height:11.5px;fill:none;stroke:#69c440;stroke-width:1.080;stroke-linecap:round;stroke-linejoin:round" viewBox="0 0 17.500 11.500"><path d="M1.200 5.300l5.200 5.100L16.300 1.000"/></svg>
<span class="abs" style="left:411.01px;top:423.50px;font-size:12.20px;line-height:15px;letter-spacing:0.538px;color:#4d4d4d;">04.07.2024</span>
<span class="abs" style="left:744.42px;top:423.50px;font-size:12.20px;line-height:15px;letter-spacing:0.256px;color:#4d4d4d;">Нераспределенный расход</span>
<span class="abs" style="left:1047.56px;top:423.50px;font-size:12.20px;line-height:15px;letter-spacing:0.702px;color:#6485c5;">412.58</span>
<span class="abs" style="left:1107.54px;top:423.50px;font-size:12.00px;line-height:15px;letter-spacing:0.000px;color:#4d4d4d;">МБУДО СШОР</span>
<div class="abs" style="left:1271px;top:413.80px;width:168.7px;height:33px;overflow:hidden"><div style="position:absolute;left:-1271px;top:-413.80px">
<span class="abs" style="left:1280.11px;top:423.50px;font-size:12.20px;line-height:15px;letter-spacing:0.010px;color:#4d4d4d;">Оплата по Акту №21 от 04.07</span>
</div></div>
<span class="abs" style="left:1450.36px;top:423.50px;font-size:12.20px;line-height:15px;letter-spacing:0.492px;color:#4d4d4d;">06.09.2025 17:35:08</span>
<div class="abs" style="left:112px;top:480.20px;width:1468px;height:1px;background:#efeff2"></div>
<svg class="abs" style="left:120px;top:456.35px;width:15.6px;height:15.6px" viewBox="0 0 15.600 15.600"><rect width="15.600" height="15.600" rx="2.300" fill="#fdc64f"/><path d="M4.200 8.100L6.600 10.500L11.600 5.200" fill="none" stroke="#262d48" stroke-width="1.300" stroke-linecap="round" stroke-linejoin="round"/></svg>
<div class="abs" style="left:165.3px;top:458.05px;width:12.4px;height:12.4px;border-radius:50%;border:1px solid #b3b5c2;background:#fff"></div>
<svg class="abs" style="left:216.3px;top:459.25px;width:17.5px;height:11.5px;fill:none;stroke:#69c440;stroke-width:1.080;stroke-linecap:round;stroke-linejoin:round" viewBox="0 0 17.500 11.500"><path d="M1.200 5.300l5.200 5.100L16.300 1.000"/></svg>
<span class="abs" style="left:411.01px;top:456.50px;font-size:12.20px;line-height:15px;letter-spacing:0.538px;color:#4d4d4d;">04.07.2024</span>
<span class="abs" style="left:744.42px;top:456.50px;font-size:12.20px;line-height:15px;letter-spacing:0.256px;color:#4d4d4d;">Нераспределенный расход</span>
<span class="abs" style="left:1036.45px;top:456.50px;font-size:12.20px;line-height:15px;letter-spacing:0.624px;color:#6485c5;">1 135.00</span>
<span class="abs" style="left:1108.50px;top:456.50px;font-size:12.20px;line-height:15px;letter-spacing:0.191px;color:#4d4d4d;">АО "БАНК"</span>
<div class="abs" style="left:1271px;top:447.25px;width:168.7px;height:33px;overflow:hidden"><div style="position:absolute;left:-1271px;top:-447.25px">
<span class="abs" style="left:1280.11px;top:456.50px;font-size:12.20px;line-height:15px;letter-spacing:0.083px;color:#4d4d4d;">Отражение операции оплаты</span>
</div></div>
<span class="abs" style="left:1450.36px;top:456.50px;font-size:12.20px;line-height:15px;letter-spacing:0.492px;color:#4d4d4d;">06.09.2025 17:35:08</span>
<div class="abs" style="left:112px;top:513.65px;width:1468px;height:1px;background:#efeff2"></div>
<svg class="abs" style="left:120px;top:489.8px;width:15.6px;height:15.6px" viewBox="0 0 15.600 15.600"><rect width="15.600" height="15.600" rx="2.300" fill="#fdc64f"/><path d="M4.200 8.100L6.600 10.500L11.600 5.200" fill="none" stroke="#262d48" stroke-width="1.300" stroke-linecap="round" stroke-linejoin="round"/></svg>
<div class="abs" style="left:165.3px;top:491.50px;width:12.4px;height:12.4px;border-radius:50%;border:1px solid #b3b5c2;background:#fff"></div>
<svg class="abs" style="left:216.3px;top:492.70px;width:17.5px;height:11.5px;fill:none;stroke:#69c440;stroke-width:1.080;stroke-linecap:round;stroke-linejoin:round" viewBox="0 0 17.500 11.500"><path d="M1.200 5.300l5.200 5.100L16.300 1.000"/></svg>
<span class="abs" style="left:411.01px;top:490.50px;font-size:12.20px;line-height:15px;letter-spacing:0.538px;color:#4d4d4d;">04.07.2024</span>
<span class="abs" style="left:744.42px;top:490.50px;font-size:12.20px;line-height:15px;letter-spacing:0.256px;color:#4d4d4d;">Нераспределенный расход</span>
<span class="abs" style="left:1046.95px;top:490.50px;font-size:12.20px;line-height:15px;letter-spacing:0.823px;color:#6485c5;">104.80</span>
<span class="abs" style="left:1108.50px;top:490.50px;font-size:12.20px;line-height:15px;letter-spacing:0.191px;color:#4d4d4d;">АО "БАНК"</span>
<div class="abs" style="left:1271px;top:480.70px;width:168.7px;height:33px;overflow:hidden"><div style="position:absolute;left:-1271px;top:-480.70px">
<span class="abs" style="left:1280.11px;top:490.50px;font-size:12.20px;line-height:15px;letter-spacing:0.083px;color:#4d4d4d;">Отражение операции оплаты</span>
</div></div>
<span class="abs" style="left:1450.36px;top:490.50px;font-size:12.20px;line-height:15px;letter-spacing:0.492px;color:#4d4d4d;">06.09.2025 17:35:08</span>
<div class="abs" style="left:112px;top:547.10px;width:1468px;height:1px;background:#efeff2"></div>
<svg class="abs" style="left:120px;top:523.25px;width:15.6px;height:15.6px" viewBox="0 0 15.600 15.600"><rect width="15.600" height="15.600" rx="2.300" fill="#fdc64f"/><path d="M4.200 8.100L6.600 10.500L11.600 5.200" fill="none" stroke="#262d48" stroke-width="1.300" stroke-linecap="round" stroke-linejoin="round"/></svg>
<div class="abs" style="left:165.3px;top:524.95px;width:12.4px;height:12.4px;border-radius:50%;border:1px solid #b3b5c2;background:#fff"></div>
<svg class="abs" style="left:216.3px;top:526.15px;width:17.5px;height:11.5px;fill:none;stroke:#69c440;stroke-width:1.080;stroke-linecap:round;stroke-linejoin:round" viewBox="0 0 17.500 11.500"><path d="M1.200 5.300l5.200 5.100L16.300 1.000"/></svg>
<span class="abs" style="left:411.01px;top:523.50px;font-size:12.20px;line-height:15px;letter-spacing:0.538px;color:#4d4d4d;">02.07.2024</span>
<span class="abs" style="left:744.42px;top:523.50px;font-size:12.20px;line-height:15px;letter-spacing:0.256px;color:#4d4d4d;">Нераспределенный расход</span>
<span class="abs" style="left:1047.19px;top:523.50px;font-size:12.20px;line-height:15px;letter-spacing:0.775px;color:#6485c5;">609.00</span>
<span class="abs" style="left:1108.50px;top:523.50px;font-size:12.20px;line-height:15px;letter-spacing:0.191px;color:#4d4d4d;">АО "БАНК"</span>
<div class="abs" style="left:1271px;top:514.15px;width:168.7px;height:33px;overflow:hidden"><div style="position:absolute;left:-1271px;top:-514.15px">
<span class="abs" style="left:1280.11px;top:523.50px;font-size:12.20px;line-height:15px;letter-spacing:0.083px;color:#4d4d4d;">Отражение операции оплаты</span>
</div></div>
<span class="abs" style="left:1450.36px;top:523.50px;font-size:12.20px;line-height:15px;letter-spacing:0.492px;color:#4d4d4d;">06.09.2025 17:35:08</span>
<div class="abs" style="left:112px;top:580.55px;width:1468px;height:1px;background:#efeff2"></div>
<svg class="abs" style="left:120px;top:556.7px;width:15.6px;height:15.6px" viewBox="0 0 15.600 15.600"><rect width="15.600" height="15.600" rx="2.300" fill="#fdc64f"/><path d="M4.200 8.100L6.600 10.500L11.600 5.200" fill="none" stroke="#262d48" stroke-width="1.300" stroke-linecap="round" stroke-linejoin="round"/></svg>
<div class="abs" style="left:165.3px;top:558.40px;width:12.4px;height:12.4px;border-radius:50%;border:1px solid #b3b5c2;background:#fff"></div>
<svg class="abs" style="left:216.3px;top:559.60px;width:17.5px;height:11.5px;fill:none;stroke:#69c440;stroke-width:1.080;stroke-linecap:round;stroke-linejoin:round" viewBox="0 0 17.500 11.500"><path d="M1.200 5.300l5.200 5.100L16.300 1.000"/></svg>
<span class="abs" style="left:411.01px;top:557.50px;font-size:12.20px;line-height:15px;letter-spacing:0.538px;color:#4d4d4d;">02.07.2024</span>
<span class="abs" style="left:744.42px;top:557.50px;font-size:12.20px;line-height:15px;letter-spacing:0.256px;color:#4d4d4d;">Нераспределенный расход</span>
<span class="abs" style="left:1046.95px;top:557.50px;font-size:12.20px;line-height:15px;letter-spacing:0.823px;color:#6485c5;">198.00</span>
<span class="abs" style="left:1108.50px;top:557.50px;font-size:12.20px;line-height:15px;letter-spacing:0.191px;color:#4d4d4d;">АО "БАНК"</span>
<div class="abs" style="left:1271px;top:547.60px;width:168.7px;height:33px;overflow:hidden"><div style="position:absolute;left:-1271px;top:-547.60px">
<span class="abs" style="left:1279.62px;top:557.50px;font-size:12.20px;line-height:15px;letter-spacing:0.037px;color:#4d4d4d;">Плата за предоставление усл</span>
</div></div>
<span class="abs" style="left:1450.36px;top:557.50px;font-size:12.20px;line-height:15px;letter-spacing:0.492px;color:#4d4d4d;">06.09.2025 17:35:08</span>
<div class="abs" style="left:112px;top:614.00px;width:1468px;height:1px;background:#efeff2"></div>
<svg class="abs" style="left:120px;top:590.15px;width:15.6px;height:15.6px" viewBox="0 0 15.600 15.600"><rect width="15.600" height="15.600" rx="2.300" fill="#fdc64f"/><path d="M4.200 8.100L6.600 10.500L11.600 5.200" fill="none" stroke="#262d48" stroke-width="1.300" stroke-linecap="round" stroke-linejoin="round"/></svg>
<div class="abs" style="left:165.3px;top:591.85px;width:12.4px;height:12.4px;border-radius:50%;border:1px solid #b3b5c2;background:#fff"></div>
<svg class="abs" style="left:216.3px;top:593.05px;width:17.5px;height:11.5px;fill:none;stroke:#69c440;stroke-width:1.080;stroke-linecap:round;stroke-linejoin:round" viewBox="0 0 17.500 11.500"><path d="M1.200 5.300l5.200 5.100L16.300 1.000"/></svg>
<span class="abs" style="left:411.01px;top:590.50px;font-size:12.20px;line-height:15px;letter-spacing:0.538px;color:#4d4d4d;">02.07.2024</span>
<span class="abs" style="left:744.42px;top:590.50px;font-size:12.20px;line-height:15px;letter-spacing:0.256px;color:#4d4d4d;">Нераспределенный расход</span>
<span class="abs" style="left:1037.06px;top:590.50px;font-size:12.20px;line-height:15px;letter-spacing:0.537px;color:#6485c5;">4 990.00</span>
<span class="abs" style="left:1108.50px;top:590.50px;font-size:12.20px;line-height:15px;letter-spacing:0.191px;color:#4d4d4d;">АО "БАНК"</span>
<div class="abs" style="left:1271px;top:581.05px;width:168.7px;height:33px;overflow:hidden"><div style="position:absolute;left:-1271px;top:-581.05px">
<span class="abs" style="left:1279.62px;top:590.50px;font-size:12.20px;line-height:15px;letter-spacing:0.166px;color:#4d4d4d;">Плата за обслуживание счета</span>
</div></div>
<span class="abs" style="left:1450.36px;top:590.50px;font-size:12.20px;line-height:15px;letter-spacing:0.492px;color:#4d4d4d;">06.09.2025 17:35:08</span>
<div class="abs" style="left:112px;top:647.45px;width:1468px;height:1px;background:#efeff2"></div>
<svg class="abs" style="left:120px;top:623.6px;width:15.6px;height:15.6px" viewBox="0 0 15.600 15.600"><rect width="15.600" height="15.600" rx="2.300" fill="#fdc64f"/><path d="M4.200 8.100L6.600 10.500L11.600 5.200" fill="none" stroke="#262d48" stroke-width="1.300" stroke-linecap="round" stroke-linejoin="round"/></svg>
<div class="abs" style="left:165.3px;top:625.30px;width:12.4px;height:12.4px;border-radius:50%;border:1px solid #b3b5c2;background:#fff"></div>
<svg class="abs" style="left:216.3px;top:626.50px;width:17.5px;height:11.5px;fill:none;stroke:#69c440;stroke-width:1.080;stroke-linecap:round;stroke-linejoin:round" viewBox="0 0 17.500 11.500"><path d="M1.200 5.300l5.200 5.100L16.300 1.000"/></svg>
<span class="abs" style="left:411.01px;top:624.50px;font-size:12.20px;line-height:15px;letter-spacing:0.538px;color:#4d4d4d;">02.07.2024</span>
<span class="abs" style="left:744.42px;top:624.50px;font-size:12.20px;line-height:15px;letter-spacing:0.256px;color:#4d4d4d;">Нераспределенный расход</span>
<span class="abs" style="left:1029.55px;top:624.50px;font-size:12.20px;line-height:15px;letter-spacing:0.570px;color:#6485c5;">15 000.00</span>
<span class="abs" style="left:1108.50px;top:624.50px;font-size:12.20px;line-height:15px;letter-spacing:0.191px;color:#4d4d4d;">АО "БАНК"</span>
<div class="abs" style="left:1271px;top:614.50px;width:168.7px;height:33px;overflow:hidden"><div style="position:absolute;left:-1271px;top:-614.50px">
<span class="abs" style="left:1280.11px;top:624.50px;font-size:12.20px;line-height:15px;letter-spacing:0.083px;color:#4d4d4d;">Отражение операции оплаты</span>
</div></div>
<span class="abs" style="left:1450.36px;top:624.50px;font-size:12.20px;line-height:15px;letter-spacing:0.492px;color:#4d4d4d;">06.09.2025 17:35:08</span>
<div class="abs" style="left:112px;top:680.90px;width:1468px;height:1px;background:#efeff2"></div>
<svg class="abs" style="left:120px;top:657.05px;width:15.6px;height:15.6px" viewBox="0 0 15.600 15.600"><rect width="15.600" height="15.600" rx="2.300" fill="#fdc64f"/><path d="M4.200 8.100L6.600 10.500L11.600 5.200" fill="none" stroke="#262d48" stroke-width="1.300" stroke-linecap="round" stroke-linejoin="round"/></svg>
<div class="abs" style="left:165.3px;top:658.75px;width:12.4px;height:12.4px;border-radius:50%;border:1px solid #b3b5c2;background:#fff"></div>
<svg class="abs" style="left:216.3px;top:659.95px;width:17.5px;height:11.5px;fill:none;stroke:#69c440;stroke-width:1.080;stroke-linecap:round;stroke-linejoin:round" viewBox="0 0 17.500 11.500"><path d="M1.200 5.300l5.200 5.100L16.300 1.000"/></svg>
<span class="abs" style="left:411.01px;top:657.50px;font-size:12.20px;line-height:15px;letter-spacing:0.538px;color:#4d4d4d;">01.07.2024</span>
<span class="abs" style="left:744.42px;top:657.50px;font-size:12.20px;line-height:15px;letter-spacing:0.256px;color:#4d4d4d;">Нераспределенный расход</span>
<span class="abs" style="left:1029.55px;top:657.50px;font-size:12.20px;line-height:15px;letter-spacing:0.570px;color:#6485c5;">15 000.00</span>
<span class="abs" style="left:1108.01px;top:657.50px;font-size:12.20px;line-height:15px;letter-spacing:0.349px;color:#4d4d4d;">ООО "ЛЕКС"</span>
<div class="abs" style="left:1271px;top:647.95px;width:168.7px;height:33px;overflow:hidden"><div style="position:absolute;left:-1271px;top:-647.95px">
<span class="abs" style="left:1280.12px;top:657.50px;font-size:12.12px;line-height:15px;letter-spacing:0.000px;color:#4d4d4d;">Оплата по Счету №41 от 01.0</span>
</div></div>
<span class="abs" style="left:1450.36px;top:657.50px;font-size:12.20px;line-height:15px;letter-spacing:0.492px;color:#4d4d4d;">06.09.2025 17:35:08</span>
<div class="abs" style="left:112px;top:663.5px;width:1466px;height:10.400px;border-radius:6px;background:linear-gradient(#e9e9e9,#f4f4f4 40%,#f1f1f1);"></div>
<div class="abs" style="left:112px;top:663.5px;width:1166px;height:10.400px;border-radius:6px;background:#c8c8c8"></div>
</div></div>
<div class="abs" style="left:111.4px;top:702.2px;width:93.00px;height:37.800px;border-radius:4.500px;background:#fdb92b"></div>
<span class="abs" style="left:125.50px;top:713.00px;font-size:13.73px;line-height:17px;letter-spacing:0.300px;color:#2a2200;">Изменить</span>
<div class="abs" style="left:212.2px;top:702.2px;width:180.00px;height:37.800px;border-radius:4.500px;border:1px solid #fbcf82;background:#fff"></div>
<span class="abs" style="left:227.70px;top:713.00px;font-size:13.73px;line-height:17px;letter-spacing:0.113px;color:#1e2130;">Изменить по правилам</span>
<div class="abs" style="left:400.5px;top:702.2px;width:108.25px;height:37.800px;border-radius:4.500px;border:1px solid #c8c9d2;background:#fff"></div>
<span class="abs" style="left:415.65px;top:713.00px;font-size:13.73px;line-height:17px;letter-spacing:0.334px;color:#1e2130;">Копировать</span>
<div class="abs" style="left:516.25px;top:702.2px;width:83.75px;height:37.800px;border-radius:4.500px;border:1px solid #c8c9d2;background:#fff"></div>
<span class="abs" style="left:532.59px;top:713.00px;font-size:13.60px;line-height:17px;letter-spacing:0.000px;color:#1e2130;">Удалить</span>
<div class="abs" style="left:608.25px;top:702.2px;width:148.50px;height:37.800px;border-radius:4.500px;border:1px solid #fbcf82;background:#fff"></div>
<span class="abs" style="left:623.81px;top:713.00px;font-size:13.73px;line-height:17px;letter-spacing:0.063px;color:#1e2130;">Создать документ</span>
<div class="abs" style="left:764.25px;top:702.2px;width:207.50px;height:37.800px;border-radius:4.500px;border:1px solid #fbcf82;background:#fff"></div>
<span class="abs" style="left:780.06px;top:713.00px;font-size:13.73px;line-height:17px;letter-spacing:0.093px;color:#1e2130;">Создать встречный платеж</span>
<div class="abs" style="left:979.25px;top:702.2px;width:94.50px;height:37.800px;border-radius:4.500px;border:1px solid #c8c9d2;background:#fff"></div>
<span class="abs" style="left:994.95px;top:713.00px;font-size:13.73px;line-height:17px;letter-spacing:0.054px;color:#1e2130;">Обновить</span>
<div class="abs" style="left:1534px;top:698px;width:45.400px;height:45.400px;border-radius:50%;background:#242a3b"></div>
<svg class="abs" style="left:1545.700px;top:709.700px;width:22px;height:22px" viewBox="0 0 22 22"><circle cx="11" cy="11" r="10" fill="none" stroke="#fff" stroke-width="1.400"/><path d="M7.900 8.600c0-1.800 1.400-3 3.200-3s3.100 1.100 3.100 2.700c0 2.200-3 2.400-3 4.700" fill="none" stroke="#fff" stroke-width="1.700" stroke-linecap="round"/><circle cx="11.150" cy="16" r="1.150" fill="#fff"/></svg>
<svg class="abs" style="left:0;top:0;width:1600px;height:770px;overflow:visible" viewBox="0 0 1600 770"><defs><filter id="sh" x="-20%" y="-20%" width="140%" height="140%"><feDropShadow dx="1.200" dy="1.400" stdDeviation="0.900" flood-color="#000" flood-opacity="0.450"/></filter></defs><rect x="105.150" y="226.000" width="42.500" height="443.500" rx="4.500" fill="none" stroke="#e0342c" stroke-width="4"/><rect x="209.600" y="697" width="186.400" height="48" rx="6" fill="none" stroke="#e0342c" stroke-width="4"/><g filter="url(#sh)" fill="#e0342c"><path d="M294.350 356.170L249.550 380.510L166.950 426.920L170.050 432.280L251.450 383.790L294.850 357.030Z"/><path d="M160.700 434.100L164.200 424.000L172.200 437.700Z"/><path d="M282.840 579.360L284.560 578.840L316.390 680.260L311.410 681.740Z"/><path d="M316.600 689.700L306.900 683.300L321.600 679.000Z"/></g></svg>
<svg class="abs" style="left:298px;top:340px;width:12px;height:20px" viewBox="298 340 12 20"><path d="M307.100 358.800V341.700H305.400C304.600 343.600 302.600 345.400 299.900 346.500V348.700C301.600 348.100 303.700 346.900 304.900 345.700V358.800Z" fill="#e0342c"/></svg>
<span class="abs" style="left:275.32px;top:549.00px;font-size:25.65px;line-height:30px;letter-spacing:0.000px;color:#e0342c;">2</span>


</body></html>
